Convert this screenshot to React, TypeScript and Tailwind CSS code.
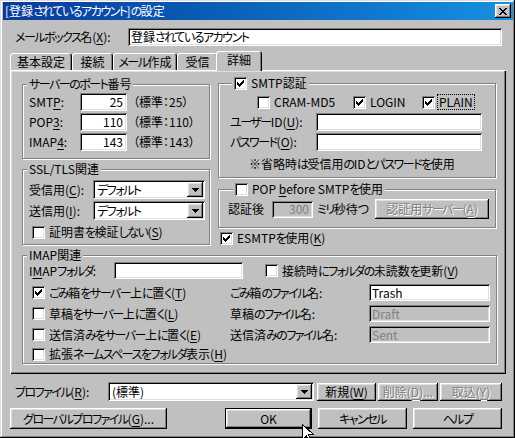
import { Children } from "react";
import type { ReactNode } from "react";

const RAISED =
  "shadow-[inset_-1px_-1px_#000,inset_1px_1px_#fff,inset_-2px_-2px_#808080,inset_2px_2px_#dfdfdf]";
const SUNKEN =
  "shadow-[inset_1px_1px_#808080,inset_-1px_-1px_#fff,inset_2px_2px_#000,inset_-2px_-2px_#dfdfdf]";
const ETCHED = "border border-[#808080] shadow-[inset_1px_1px_#fff,1px_1px_#fff]";
const DIS = "text-[#808080] [text-shadow:1px_1px_0_#fff]";

// kana in the bitmap UI font are narrower than Noto's, so tighten kana runs only
const KANA = /([\u3040-\u30ff]+)/;
function J({ children }: { children: ReactNode }) {
  return (
    <>
      {Children.map(children, (c) =>
        typeof c === "string"
          ? c.split(KANA).map((p, i) =>
              i % 2 === 1 ? (
                <span key={i} className="tracking-[-1.5px]">
                  {p}
                </span>
              ) : (
                p
              )
            )
          : c
      )}
    </>
  );
}

function L({ className = "", children }: { className?: string; children: ReactNode }) {
  return (
    <span className={`shrink-0 whitespace-nowrap ${className}`}>
      <J>{children}</J>
    </span>
  );
}

function U({ children }: { children: ReactNode }) {
  return <span className="underline underline-offset-[2px]">{children}</span>;
}

function Check({ checked = false }: { checked?: boolean }) {
  return (
    <span className={`relative inline-block shrink-0 w-[13px] h-[13px] bg-white ${SUNKEN}`}>
      {checked && (
        <svg width="13" height="13" viewBox="0 0 13 13" shapeRendering="crispEdges" className="absolute left-0 top-0">
          <path
            d="M9 3h1v1h-1zM8 4h2v1h-2zM3 5h1v1h-1zM7 5h3v1h-3zM3 6h2v1h-2zM6 6h3v1h-3zM3 7h5v1h-5zM4 8h3v1h-3zM5 9h1v1h-1z"
            fill="#000"
          />
        </svg>
      )}
    </span>
  );
}

function CheckItem({
  checked = false,
  children,
  className = "",
}: {
  checked?: boolean;
  children: ReactNode;
  className?: string;
}) {
  return (
    <div className={`flex items-center gap-[4px] ${className}`}>
      <Check checked={checked} />
      <L>{children}</L>
    </div>
  );
}

function Field({
  className,
  value = "",
  disabled = false,
  right = false,
}: {
  className: string;
  value?: string;
  disabled?: boolean;
  right?: boolean;
}) {
  return (
    <div
      className={`flex items-center shrink-0 whitespace-nowrap ${SUNKEN} ${className} ${
        disabled ? "bg-[#c0c0c0] text-[#808080]" : "bg-white"
      } ${right ? "justify-end pr-[4px]" : "pl-[3px]"}`}
    >
      <J>{value}</J>
    </div>
  );
}

function Arrow() {
  return (
    <svg width="7" height="4" viewBox="0 0 7 4" shapeRendering="crispEdges">
      <path d="M0 0h7v1h-1v1h-1v1h-1v1h-1v-1h-1v-1h-1v-1h-1z" fill="#000" />
    </svg>
  );
}

function Combo({ className, value }: { className: string; value: string }) {
  return (
    <div className={`flex items-stretch shrink-0 bg-white p-[2px] ${SUNKEN} ${className}`}>
      <div className="flex-1 flex items-center pl-[2px] whitespace-nowrap">
        <J>{value}</J>
      </div>
      <div className={`w-[16px] flex items-center justify-center bg-[#c0c0c0] ${RAISED}`}>
        <Arrow />
      </div>
    </div>
  );
}

function Btn({
  className,
  children,
  disabled = false,
  def = false,
}: {
  className: string;
  children: ReactNode;
  disabled?: boolean;
  def?: boolean;
}) {
  if (def) {
    return (
      <div className={`flex shrink-0 border border-black ${className}`}>
        <div className={`flex-1 flex items-center justify-center ${RAISED}`}>{children}</div>
      </div>
    );
  }
  return (
    <div
      className={`flex items-center justify-center shrink-0 whitespace-nowrap ${RAISED} ${className} ${
        disabled ? DIS : ""
      }`}
    >
      <J>{children}</J>
    </div>
  );
}

function Group({
  title,
  titleLeft,
  className,
  children,
}: {
  title: ReactNode;
  titleLeft: string;
  className: string;
  children: ReactNode;
}) {
  return (
    <div className={`relative ${ETCHED} ${className}`}>
      <div
        className={`absolute -top-[8px] ${titleLeft} flex items-center gap-[4px] h-[14px] px-[2px] bg-[#c0c0c0] whitespace-nowrap`}
      >
        {title}
      </div>
      {children}
    </div>
  );
}

function Tab({ label, className }: { label: string; className: string }) {
  return (
    <div
      className={`h-[17px] flex items-center justify-center rounded-t-[3px] shadow-[inset_1px_1px_#fff,inset_-1px_0_#000,inset_-2px_0_#808080] ${className}`}
    >
      <L>{label}</L>
    </div>
  );
}

export default function App() {
  return (
    <div className="relative w-[515px] h-[438px] overflow-hidden bg-[#c0c0c0] text-black text-[12px] leading-[14px] font-['Noto_Sans_CJK_JP',sans-serif] [font-feature-settings:'palt'] pt-[2px] pl-[3px] pr-[2px] shadow-[inset_-1px_-1px_#000,inset_1px_1px_#dfdfdf,inset_-2px_-2px_#808080,inset_2px_2px_#fff]">
      {/* title bar */}
      <div className="h-[18px] flex items-center justify-between bg-linear-to-r from-[#0a3a9a] to-[#1890e0] text-white pl-[2px] pr-[2px]">
        <L>[登録されているアカウント]の設定</L>
        <div className={`w-[16px] h-[14px] bg-[#c0c0c0] flex items-center justify-center ${RAISED}`}>
          <svg width="8" height="7" viewBox="0 0 8 7" shapeRendering="crispEdges">
            <path
              d="M0 0h2v1h-2zM6 0h2v1h-2zM1 1h2v1h-2zM5 1h2v1h-2zM2 2h4v1h-4zM3 3h2v1h-2zM2 4h4v1h-4zM1 5h2v1h-2zM5 5h2v1h-2zM0 6h2v1h-2zM6 6h2v1h-2z"
              fill="#000"
            />
          </svg>
        </div>
      </div>

      {/* mailbox name */}
      <div className="flex items-center mt-[8px] h-[18px]">
        <L className="ml-[12px] w-[113px]">
          メールボックス名(<U>X</U>):
        </L>
        <Field className="w-[374px] h-[18px]" value="登録されているアカウント" />
      </div>

      {/* tabs */}
      <div className="flex items-end mt-[5px] ml-[7px] h-[19px]">
        <Tab label="基本設定" className="w-[62px]" />
        <Tab label="接続" className="w-[41px]" />
        <Tab label="メール作成" className="w-[64px]" />
        <Tab label="受信" className="w-[41px]" />
        <div className="relative z-10 -ml-[2px] -mb-[1px] w-[46px] h-[20px] flex items-center justify-center pb-[2px] bg-[#c0c0c0] rounded-t-[3px] shadow-[inset_1px_1px_#fff,inset_-1px_0_#000,inset_-2px_0_#808080]">
          詳細
        </div>
      </div>

      {/* tab panel */}
      <div className="relative w-[496px] h-[304px] ml-[7px] pt-[13px] pl-[12px] shadow-[inset_1px_1px_#fff,inset_-1px_-1px_#000,inset_-2px_-2px_#808080,inset_2px_2px_#dfdfdf]">
        <div className="flex items-start gap-[8px]">
          {/* left column */}
          <div className="w-[188px] mt-[1px]">
            <Group title={<L>サーバーのポート番号</L>} titleLeft="left-[4px]" className="h-[75px]">
              <div className="flex flex-col gap-[2px] pt-[8px] pl-[6px]">
                <div className="flex items-center h-[18px]">
                  <L className="w-[51px]">
                    SMT<U>P</U>:
                  </L>
                  <Field className="w-[47px] h-[18px]" value="25" right />
                  <L className="ml-[6px]">（標準：25）</L>
                </div>
                <div className="flex items-center h-[18px]">
                  <L className="w-[51px]">
                    POP<U>3</U>:
                  </L>
                  <Field className="w-[47px] h-[18px]" value="110" right />
                  <L className="ml-[6px]">（標準：110）</L>
                </div>
                <div className="flex items-center h-[18px]">
                  <L className="w-[51px]">
                    IMAP<U>4</U>:
                  </L>
                  <Field className="w-[47px] h-[18px]" value="143" right />
                  <L className="ml-[6px]">（標準：143）</L>
                </div>
              </div>
            </Group>

            <Group title={<L>SSL/TLS関連</L>} titleLeft="left-[4px]" className="h-[76px] mt-[10px]">
              <div className="flex flex-col pt-[10px] pl-[6px]">
                <div className="flex items-center h-[19px]">
                  <L className="w-[64px]">
                    受信用(<U>C</U>):
                  </L>
                  <Combo className="w-[112px] h-[19px]" value="デフォルト" />
                </div>
                <div className="flex items-center h-[19px] mt-[2px]">
                  <L className="w-[64px]">
                    送信用(<U>I</U>):
                  </L>
                  <Combo className="w-[112px] h-[19px]" value="デフォルト" />
                </div>
                <CheckItem className="h-[16px] mt-[4px] ml-[3px]">
                  証明書を検証しない(<U>S</U>)
                </CheckItem>
              </div>
            </Group>
          </div>

          {/* right column */}
          <div className="w-[278px]">
            <Group
              title={
                <>
                  <Check checked />
                  <L>SMTP認証</L>
                </>
              }
              titleLeft="left-[13px]"
              className="h-[95px]"
            >
              <div className="flex flex-col pt-[10px]">
                <div className="flex items-center h-[16px] pl-[38px]">
                  <CheckItem className="w-[96px]">CRAM-MD5</CheckItem>
                  <CheckItem checked className="w-[69px]">
                    LOGIN
                  </CheckItem>
                  <div className="flex items-center gap-[3px]">
                    <Check checked />
                    <span className="outline outline-1 outline-dotted outline-black px-[1px]">PLAIN</span>
                  </div>
                </div>
                <div className="flex items-center h-[18px] mt-[3px] pl-[11px]">
                  <L className="w-[86px]">
                    ユーザーID(<U>U</U>):
                  </L>
                  <Field className="w-[166px] h-[18px]" />
                </div>
                <div className="flex items-center h-[18px] mt-[2px] pl-[11px]">
                  <L className="w-[86px]">
                    パスワード(<U>O</U>):
                  </L>
                  <Field className="w-[166px] h-[18px]" />
                </div>
                <L className="block h-[14px] mt-[6px] pl-[30px]">※省略時は受信用のIDとパスワードを使用</L>
              </div>
            </Group>

            <Group
              title={
                <>
                  <Check />
                  <L>
                    POP <U>b</U>efore SMTPを使用
                  </L>
                </>
              }
              titleLeft="left-[14px]"
              className="h-[39px] mt-[11px]"
            >
              <div className="flex items-center h-[20px] mt-[9px] pl-[9px]">
                <L className="w-[44px]">認証後</L>
                <Field className="w-[41px] h-[17px]" value="300" disabled right />
                <L className="ml-[4px] w-[58px]">ミリ秒待つ</L>
                <Btn className="w-[114px] h-[20px]" disabled>
                  認証用サーバー(<U>A</U>)
                </Btn>
              </div>
            </Group>

            <CheckItem checked className="h-[16px] mt-[2px] ml-[2px]">
              ESMTPを使用(<U>K</U>)
            </CheckItem>
          </div>
        </div>

        {/* IMAP */}
        <Group title={<L>IMAP関連</L>} titleLeft="left-[4px]" className="w-[475px] h-[109px] mt-[9px]">
          <div className="flex flex-col pt-[6px]">
            <div className="flex items-center h-[17px] pl-[6px]">
              <L className="w-[85px]">
                I<U>M</U>APフォルダ:
              </L>
              <Field className="w-[129px] h-[17px]" />
              <CheckItem className="ml-[22px]">
                接続時にフォルダの未読数を更新(<U>V</U>)
              </CheckItem>
            </div>
            <div className="flex items-center h-[21px] mt-[3px]">
              <CheckItem checked className="w-[207px] pl-[9px]">
                ごみ箱をサーバー上に置く(<U>T</U>)
              </CheckItem>
              <L className="w-[139px]">ごみ箱のファイル名:</L>
              <Field className="w-[121px] h-[17px]" value="Trash" />
            </div>
            <div className="flex items-center h-[21px]">
              <CheckItem className="w-[207px] pl-[9px]">
                草稿をサーバー上に置く(<U>L</U>)
              </CheckItem>
              <L className="w-[139px]">草稿のファイル名:</L>
              <Field className="w-[121px] h-[17px]" value="Draft" disabled />
            </div>
            <div className="flex items-center h-[21px]">
              <CheckItem className="w-[207px] pl-[9px]">
                送信済みをサーバー上に置く(<U>E</U>)
              </CheckItem>
              <L className="w-[139px]">送信済みのファイル名:</L>
              <Field className="w-[121px] h-[17px]" value="Sent" disabled />
            </div>
            <div className="flex items-center h-[18px]">
              <CheckItem className="pl-[9px]">
                拡張ネームスペースをフォルダ表示(<U>H</U>)
              </CheckItem>
            </div>
          </div>
        </Group>
      </div>

      {/* profile row */}
      <div className="flex items-center mt-[8px] h-[19px]">
        <L className="ml-[12px] w-[93px]">
          プロファイル(<U>R</U>):
        </L>
        <Combo className="w-[206px] h-[19px]" value="(標準)" />
        <Btn className="ml-[3px] w-[59px] h-[18px]">
          新規(<U>W</U>)
        </Btn>
        <Btn className="ml-[2px] w-[60px] h-[18px]" disabled>
          削除(<U>D</U>)...
        </Btn>
        <Btn className="ml-[2px] w-[62px] h-[18px]" disabled>
          取込(<U>Y</U>)
        </Btn>
      </div>

      {/* bottom buttons */}
      <div className="flex items-center mt-[7px] h-[21px]">
        <Btn className="ml-[7px] w-[157px] h-[21px]">
          グローバルプロファイル(<U>G</U>)...
        </Btn>
        <Btn className="ml-[58px] w-[87px] h-[21px]" def>
          OK
        </Btn>
        <Btn className="ml-[6px] w-[89px] h-[21px]">キャンセル</Btn>
        <Btn className="ml-[6px] w-[89px] h-[21px]">ヘルプ</Btn>
      </div>

      {/* mouse pointer */}
      <svg
        width="12"
        height="19"
        viewBox="0 0 12 19"
        shapeRendering="crispEdges"
        className="absolute left-[302px] top-[424px] pointer-events-none"
      >
        <path d="M0.5 0.5V15.5L4.5 11.5L7 17.5L9 16.5L6.5 10.5H11.5Z" fill="#fff" stroke="#000" />
      </svg>
    </div>
  );
}
